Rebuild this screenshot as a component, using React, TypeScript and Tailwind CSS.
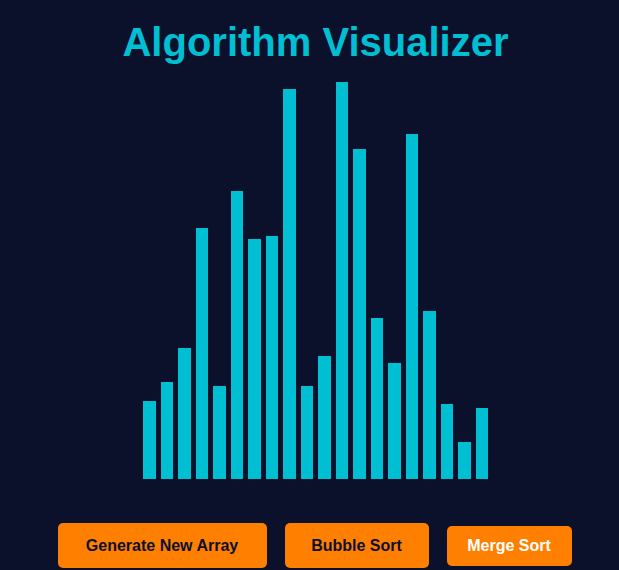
import React from "react";

const heights = [78, 97, 131, 251, 93, 288, 240, 243, 390, 93, 123, 397, 330, 161, 116, 345, 168, 75, 37, 71];

export default function App() {
  return (
    <div className="min-h-[570px] w-full bg-[#0b102b] pl-[12px] font-['Liberation_Sans',Arial,sans-serif] overflow-hidden">
      <h1 className="pt-[19px] text-center text-[40px] leading-[46px] font-bold text-[#00bfd3]">
        Algorithm Visualizer
      </h1>

      <div className="mt-[14px] flex h-[400px] items-end justify-center gap-[5px]">
        {heights.map((h, i) => (
          <div
            key={i}
            className="w-[12.5px] bg-[#00bfd3]"
            style={{ height: `${h}px` }}
          />
        ))}
      </div>

      <div className="mt-[44px] flex items-center justify-center pr-[2px]">
        <button className="h-[45px] w-[209px] rounded-[5px] bg-[#ff7f00] text-[16px] font-bold text-[#0b102b]">
          Generate New Array
        </button>
        <button className="ml-[18px] h-[45px] w-[144px] rounded-[5px] bg-[#ff7f00] text-[16px] font-bold text-[#0b102b]">
          Bubble Sort
        </button>
        <button className="ml-[18px] h-[40px] w-[125px] rounded-[5px] bg-[#ff7f00] text-[16px] font-bold text-white">
          Merge Sort
        </button>
      </div>
    </div>
  );
}
